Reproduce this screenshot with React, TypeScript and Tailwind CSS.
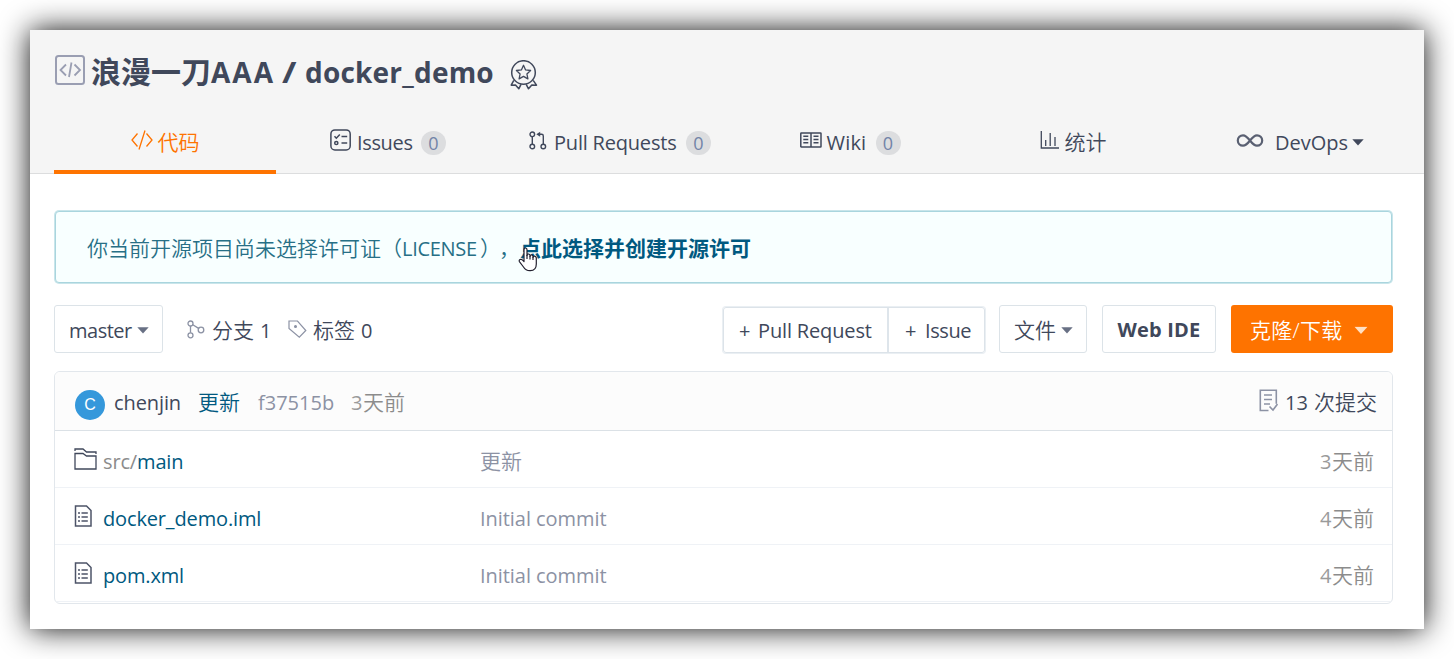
import React from "react";

type IconProps = { className?: string };

const CodeSlash = ({ className = "" }: IconProps) => (
  <svg className={className} width="22" height="22" viewBox="0 0 22 22" fill="none" stroke="currentColor" strokeWidth="1.3">
    <path d="M6.500 4.500 1 11l5.500 6.500M15.500 4.500 21 11l-5.500 6.500M14 1.500 8 20.500" />
  </svg>
);

const RepoIcon = () => (
  <svg className="block shrink-0" width="30" height="30" viewBox="0 0 30 30" fill="none" stroke="#9a9eb2" strokeWidth="2">
    <rect x="1" y="1" width="28" height="28" rx="2.500" />
    <path d="M11 9.500 5.500 15l5.500 5.500M19.500 9.500 25 15l-5.500 5.500M16.500 7.500 14 22" strokeWidth="1.800" />
  </svg>
);

const Medal = () => (
  <svg className="block shrink-0" width="28" height="30" viewBox="0 0 28 30" fill="none" stroke="#40485b" strokeWidth="1.500" strokeLinejoin="round">
    <circle cx="13.500" cy="12.500" r="11.800" />
    <path d="m13.500 5.300 2.100 4.600 5 .6-3.700 3.400 1 5-4.400-2.500-4.400 2.500 1-5-3.700-3.400 5-.6z" strokeWidth="1.300" />
    <path d="M3.800 20.300 1.200 25.200l4.300-.3L8.800 28.800l2.200-4.500M23.200 20.300l3.300 4.900-4.700-.3-3.300 3.900-2.300-4.500" />
  </svg>
);

const IssueIcon = () => (
  <svg className="block shrink-0" width="21" height="22" viewBox="0 0 21 22" fill="none" stroke="#40485b" strokeWidth="1.500">
    <rect x=".9" y=".9" width="19.300" height="20" rx="4" />
    <path d="m4.500 7.300 1.800 1.900 3.500-3.800M11.500 7.500h5.700M11.500 14h5.700" />
    <circle cx="6.300" cy="14" r="1.600" />
  </svg>
);

const PullIcon = () => (
  <svg className="block shrink-0" width="18" height="19" viewBox="0 0 18 19" fill="none" stroke="#40485b" strokeWidth="1.400">
    <circle cx="3.300" cy="3.300" r="2.300" />
    <circle cx="3.300" cy="15.500" r="2.300" />
    <circle cx="14.300" cy="15.500" r="2.300" />
    <path d="M3.300 5.600v7.600M14.300 13.200V5q0-1.700-1.700-1.700H9" />
    <path d="M11.200.8v5L7.300 3.300z" fill="#40485b" stroke="none" />
  </svg>
);

const WikiIcon = () => (
  <svg className="block shrink-0" width="22" height="16" viewBox="0 0 22 16" fill="none" stroke="#40485b" strokeWidth="1.500">
    <rect x=".8" y=".9" width="20.200" height="14" rx=".5" />
    <path d="M11 1v14M3.300 4.300h5M3.300 7.500h5M3.300 10.700h5M13.500 4.300h5M13.500 7.500h5M13.500 10.700h5" />
  </svg>
);

const StatsIcon = () => (
  <svg className="block shrink-0" width="19" height="18" viewBox="0 0 19 18" fill="none" stroke="#40485b" strokeWidth="1.300">
    <path d="M1.300 0v17H19M5.700 15V9M10.200 15V2M15 15V6" />
  </svg>
);

const InfinityIcon = () => (
  <svg className="block shrink-0" width="28" height="13" viewBox="0 0 28 13" fill="none" stroke="#5a6072" strokeWidth="2.200">
    <path d="M14 6.500C11.500 3.200 9.500 1.300 7 1.300a5.200 5.200 0 0 0 0 10.400c2.500 0 4.500-1.900 7-5.200s4.500-5.200 7-5.200a5.200 5.200 0 0 1 0 10.400c-2.500 0-4.500-1.900-7-5.200z" />
  </svg>
);

const Caret = ({ className = "" }: IconProps) => (
  <svg className={`block shrink-0 ${className}`} width="12" height="7" viewBox="0 0 12 7">
    <path d="M.3.3h11.400L6 6.500z" fill="currentColor" />
  </svg>
);

const BranchIcon = () => (
  <svg className="block shrink-0" width="18" height="19" viewBox="0 0 18 19" fill="none" stroke="#8c92a4" strokeWidth="1.300">
    <circle cx="3.500" cy="3.500" r="2.500" />
    <circle cx="3.500" cy="15.300" r="2.500" />
    <circle cx="14" cy="10" r="2.800" />
    <path d="M3.500 6v6.800M5.800 4.700l5.800 3.700" />
  </svg>
);

const TagIcon = () => (
  <svg className="block shrink-0" width="19" height="18" viewBox="0 0 19 18" fill="none" stroke="#8c92a4" strokeWidth="1.200">
    <path d="M1 1h8.500l8.300 9.500-6.500 6.600L1 8.500z" />
    <circle cx="7.500" cy="6.500" r=".9" fill="#8c92a4" />
  </svg>
);

const CommitsIcon = () => (
  <svg className="block shrink-0" width="19" height="23" viewBox="0 0 19 23" fill="none" stroke="#8c92a4" strokeWidth="1.600">
    <path d="M9.500 21.500H1.300V1.200h16v13.500M5 6h8M5 10.500h8M5 15h6M10.500 17.500l3.500 3.500 4.500-6" />
  </svg>
);

const FolderIcon = () => (
  <svg className="block shrink-0" width="23" height="22" viewBox="0 0 23 22" fill="none" stroke="#40485b" strokeWidth="1.300">
    <path d="M1 3V1h8l3.500 3H22v2M1 5.500h8L12.500 8H22v13H1z" />
  </svg>
);

const FileIcon = () => (
  <svg className="block shrink-0" width="18" height="22" viewBox="0 0 18 22" fill="none" stroke="#4d5468" strokeWidth="1.500">
    <path d="M1.500 1h11L17 5.500V21H1.500zM7.500 8h6.300M7.500 12h6.300M7.500 16h6.300M4 8h2M4 12h2M4 16h2" />
  </svg>
);

const HandCursor = () => (
  <svg className="absolute left-[-2px] top-[14px]" width="20" height="25" viewBox="0 0 20 25" fill="#fff" stroke="#23202f" strokeWidth="1.200" strokeLinejoin="round">
    <path d="M6 14.500V2.700Q6 1 7.500 1T9 2.700V8.500Q9 7 10.400 7T12 8.500V9.300Q12.200 7.900 13.400 7.900T15 9.400v.9q.2-1.200 1.400-1.200T18.300 10.800V17q0 6.500-6 6.700-4.500.2-6.800-3.700L1.400 14.600Q.8 13.300 2 12.600t2.300.3z" />
    <path d="M9 8v4M12 9v3.500M15 10v3" />
  </svg>
);

const Badge = () => (
  <span className="flex h-6 w-[25px] items-center justify-center rounded-full bg-[#dcdddf] pt-px text-[18px] text-[#7284a8]">0</span>
);

const Cjk = ({ className = "", children }: { className?: string; children: React.ReactNode }) => (
  <span className={`text-[21px] font-[350] ${className}`}>{children}</span>
);

const rows = [
  { folder: true, prefix: "src/", name: "main", message: "更新", time: "3天前" },
  { folder: false, prefix: "", name: "docker_demo.iml", message: "Initial commit", time: "4天前" },
  { folder: false, prefix: "", name: "pom.xml", message: "Initial commit", time: "4天前" },
];

export default function App() {
  return (
    <div className="h-[659px] w-[1454px] overflow-hidden bg-white p-[30px] font-['Open_Sans','Noto_Sans_CJK_SC',sans-serif] text-[20px] leading-[30px] text-[#40485b]">
      <main className="h-[599px] w-[1394px] bg-white shadow-[0_0_28px_rgba(0,0,0,0.950)]">
        <header className="flex h-36 flex-col border-b border-[#dcddde] bg-[#f5f5f5] px-6 pt-[25px]">
          <h1 className="flex h-9 items-start whitespace-nowrap pl-px font-bold">
            <span className="mr-[6px]"><RepoIcon /></span>
            <span className="-mt-px w-[120px] text-[30px] leading-9">浪漫一刀</span>
            <span className="-mt-px w-[71px] text-[28px] leading-9 tracking-[2px]">AAA</span>
            <span className="-mt-px w-[23px] text-[28px] leading-9"><span className="inline-block origin-left scale-x-125">/</span></span>
            <span className="-mt-px w-[205px] text-[28px] leading-9 tracking-[0.200px]">docker_demo</span>
            <span className="pt-[5px]"><Medal /></span>
          </h1>
          <nav className="mt-6 flex h-[60px] shrink-0 whitespace-nowrap">
            <div className="flex w-[222px] shrink-0 items-center justify-center border-b-4 border-[#fe7300] pb-px text-[#fe7300]">
              <CodeSlash className="mb-[3px] mr-[5px]" /><Cjk>代码</Cjk>
            </div>
            <div className="flex w-[224px] shrink-0 items-center justify-center pb-[3px]">
              <span className="mb-[5px] mr-[6px]"><IssueIcon /></span><span className="mr-[9px] w-[55px] tracking-[-0.350px]">Issues</span><Badge />
            </div>
            <div className="flex w-[240px] shrink-0 items-center justify-center pb-[3px]">
              <span className="mb-[5px] mr-[7px]"><PullIcon /></span><span className="mr-2 w-[124px] tracking-[-0.200px]">Pull Requests</span><Badge />
            </div>
            <div className="flex w-[220px] shrink-0 items-center justify-center pb-[3px]">
              <span className="mb-[5px] mr-[5px]"><WikiIcon /></span><span className="mr-2 w-[41px] tracking-[0.200px]">Wiki</span><Badge />
            </div>
            <div className="flex w-[226px] shrink-0 items-center justify-center pb-[5px]">
              <span className="mb-[3px] mr-[6px]"><StatsIcon /></span><Cjk>统计</Cjk>
            </div>
            <div className="flex w-[228px] shrink-0 items-center justify-center pb-[3px]">
              <span className="mb-[5px] mr-[11px]"><InfinityIcon /></span><span className="w-[77px]">DevOps</span><Caret />
            </div>
          </nav>
        </header>

        <section className="px-6 pt-[37px]">
          <div className="ml-px flex h-[72px] w-[1337px] items-center whitespace-nowrap rounded-[4px] border border-[#a9d5de] bg-[#f8ffff] pl-[31px] pt-[2px] text-[21px] text-[#276f86] shadow-[0_0_0_1px_#c9e5ea]">
            <Cjk className="w-[294px]">你当前开源项目尚未选择许可证</Cjk>
            <Cjk className="w-[21px]">（</Cjk>
            <span className="w-[78px] pt-px text-[20px] tracking-[-0.300px]">LICENSE</span>
            <Cjk className="w-[19px]">）</Cjk>
            <Cjk className="w-[21px]">，</Cjk>
            <strong className="relative -mt-px text-[#005980]">点此选择并创建开源许可<HandCursor /></strong>
          </div>

          <div className="mt-[22px] flex h-12 w-[1339px] items-center whitespace-nowrap">
            <button className="flex h-12 w-[109px] items-center rounded-[3px] border border-[#dce3e8] pl-[14px] pt-[3px]">
              <span className="w-[68px] text-left tracking-[-0.500px]">master</span><Caret className="text-[#687084]" />
            </button>
            <span className="ml-6 mr-[7px]"><BranchIcon /></span>
            <Cjk className="pt-[2px]">分支</Cjk><span className="ml-[6px] w-[28px] pt-[3px]">1</span>
            <span className="mr-[6px]"><TagIcon /></span>
            <Cjk className="pt-[2px]">标签</Cjk><span className="ml-[6px] pt-[3px]">0</span>

            <div className="ml-auto mr-px mt-px flex h-[46px] rounded-[3px] border border-[#dce3e9] shadow-[0_0_0_1px_#eaeff3]">
              <button className="flex w-[163px] items-center pl-[15px] pt-[2px]">
                <span className="w-[19px] text-left">+</span><span className="tracking-[-0.150px]">Pull Request</span>
              </button>
              <button className="flex w-[97px] items-center border-l-2 border-[#dee5eb] pl-4 pt-[2px]">
                <span className="w-[20px] text-left">+</span><span className="tracking-[-0.400px]">Issue</span>
              </button>
            </div>
            <button className="ml-[13px] flex h-12 w-[88px] items-center rounded-[3px] border border-[#dce3e8] pl-[14px]">
              <Cjk className="w-[47px] pt-px text-left">文件</Cjk><Caret className="mt-[2px] text-[#687084]" />
            </button>
            <button className="ml-[15px] flex h-12 w-[114px] items-center justify-center rounded-[3px] border border-[#dce3e8] pt-[2px] font-bold tracking-[0.200px]">Web IDE</button>
            <button className="ml-[15px] flex h-12 w-[162px] items-center rounded-[3px] bg-[#fe7300] pl-[19px] text-[21px] text-white">
              <Cjk className="w-[105px] pt-[2px] text-left tracking-[0.300px]">克隆/下载</Cjk><Caret className="mt-[2px] scale-[1.15] text-[#ffe0c4]" />
            </button>
          </div>

          <div className="mt-[18px] h-[233px] w-[1339px] overflow-hidden whitespace-nowrap rounded-[6px] border border-[#e2e7ec]">
            <div className="flex h-[59px] items-center border-b border-[#dbe1e6] bg-[#fcfcfc] pl-5 pr-[15px] pt-[3px]">
              <span className="mr-[9px] mt-[4px] flex h-[30px] w-[30px] items-center justify-center rounded-full bg-[#3598db] font-['Liberation_Sans',sans-serif] text-[16px] text-white">C</span>
              <span className="w-[84px] tracking-[-0.100px]">chenjin</span>
              <Cjk className="-mt-px w-[60px] text-[#005980]">更新</Cjk>
              <span className="w-[93px] text-[#8c92a4]">f37515b</span>
              <span className="w-3 text-[#9a9a9a]">3</span><Cjk className="-mt-px text-[#8c8c8c]">天前</Cjk>
              <span className="mb-[4px] ml-auto mr-[7px]"><CommitsIcon /></span>
              <span className="w-[29px]">13</span><Cjk className="-mt-px">次提交</Cjk>
            </div>
            {rows.map((row) => (
              <div key={row.name} className="flex h-[57px] items-center border-b border-[#eff2f6] pl-[19px] pr-[18px] pt-[5px]">
                <span className="mb-[6px] w-[29px]">{row.folder ? <FolderIcon /> : <FileIcon />}</span>
                <span className="w-[377px] tracking-[-0.150px] text-[#005980]"><span className="text-[#8c8c8c]">{row.prefix}</span>{row.name}</span>
                {row.folder ? (
                  <Cjk className="-mt-[2px] text-[#8c92a4]">{row.message}</Cjk>
                ) : (
                  <span className="tracking-[-0.050px] text-[#8c92a4]">{row.message}</span>
                )}
                <span className="ml-auto w-3 text-[#9a9a9a]">{row.time[0]}</span>
                <Cjk className="-mt-[2px] text-[#8c8c8c]">{row.time.slice(1)}</Cjk>
              </div>
            ))}
          </div>
        </section>
      </main>
    </div>
  );
}
